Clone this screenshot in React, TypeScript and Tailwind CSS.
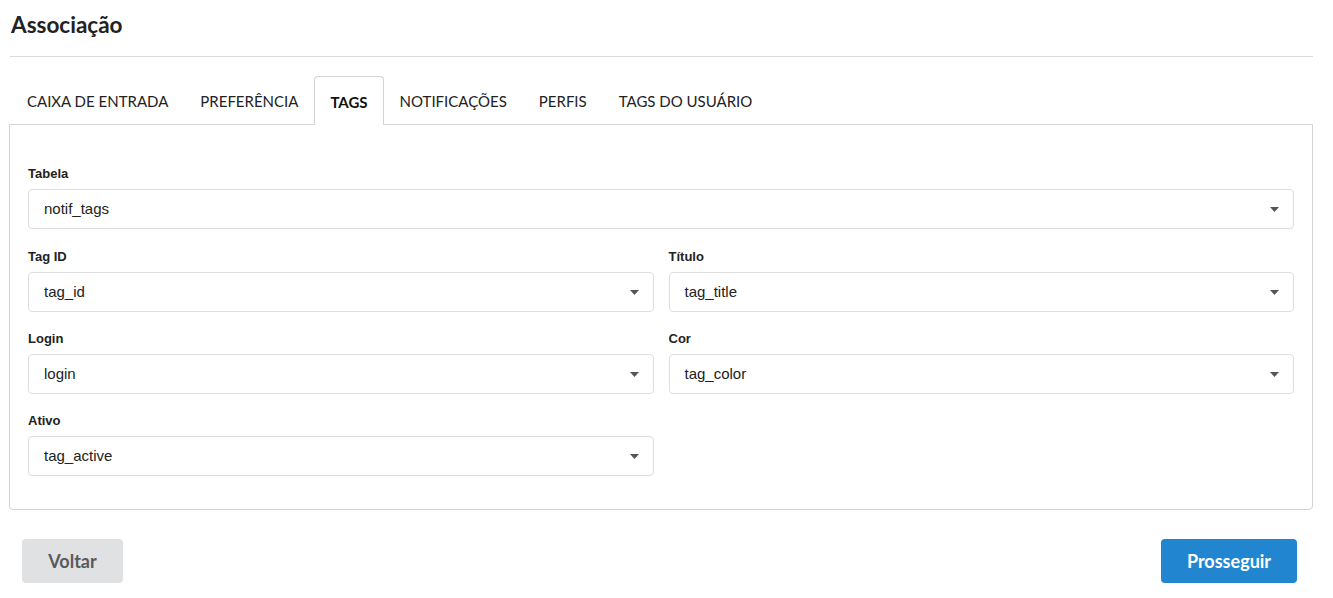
import React from "react";

const Caret = () => (
  <svg width="9" height="5" viewBox="0 0 9 5" className="shrink-0">
    <path d="M0 0 H9 L4.5 5 Z" fill="#555" />
  </svg>
);

function Field({ label, value }: { label: string; value: string }) {
  return (
    <div className="flex flex-col">
      <div className="text-[13px] font-bold text-[#222] leading-[16px] mb-[7px]" style={{ fontFamily: '"Liberation Sans", Arial, sans-serif' }}>
        {label}
      </div>
      <div className="h-[40px] border border-[#dedede] rounded-[4px] bg-white flex items-center justify-between pl-[15px] pr-[14px]">
        <span className="text-[15px] text-[#222]" style={{ fontFamily: '"Liberation Sans", Arial, sans-serif' }}>{value}</span>
        <Caret />
      </div>
    </div>
  );
}

export default function App() {
  const tabs = ["CAIXA DE ENTRADA", "PREFERÊNCIA", "TAGS", "NOTIFICAÇÕES", "PERFIS", "TAGS DO USUÁRIO"];
  return (
    <div className="w-[1333px] h-[598px] bg-white" style={{ fontFamily: 'Lato, "Open Sans", sans-serif' }}>
      <div className="ml-[10px] w-[1303px] pt-[10px]">
        <h1 className="ml-[1px] text-[22.5px] font-bold text-[#222] leading-[30px]">Associação</h1>
        <div className="mt-[16px] h-px bg-[#dcdcdc]" />
      </div>
      <div className="ml-[9px] w-[1304px] mt-[18px]">
        <div className="flex pl-[2px] h-[49px]">
          {tabs.map((t) => (
            <div
              key={t}
              className={
                t === "TAGS"
                  ? "px-[15px] flex items-center pt-[3px] border border-b-0 border-[#d4d4d5] rounded-t-[4px] bg-white text-[15px] font-bold text-[#111] relative top-px z-10"
                  : "px-[16px] flex items-center pt-[3px] text-[15px] text-[#222]"
              }
            >
              {t}
            </div>
          ))}
        </div>
        <div className="border border-[#d4d4d5] rounded-b-[4px] h-[386px] px-[18px] pt-[41px]">
          <div className="flex flex-col gap-[20px]">
            <Field label="Tabela" value="notif_tags" />
            <div className="grid grid-cols-2 gap-x-[15px] gap-y-[19px]">
              <Field label="Tag ID" value="tag_id" />
              <Field label="Título" value="tag_title" />
              <Field label="Login" value="login" />
              <Field label="Cor" value="tag_color" />
              <Field label="Ativo" value="tag_active" />
            </div>
          </div>
        </div>
        <div className="flex justify-between mt-[29px] pl-[13px] pr-[16px]">
          <button className="h-[44px] w-[101px] rounded-[4px] bg-[#e0e1e2] text-[#5a5a5a] text-[18px] font-bold">Voltar</button>
          <button className="h-[44px] w-[136px] rounded-[4px] bg-[#2185d0] text-white text-[18px] font-bold">Prosseguir</button>
        </div>
      </div>
    </div>
  );
}
